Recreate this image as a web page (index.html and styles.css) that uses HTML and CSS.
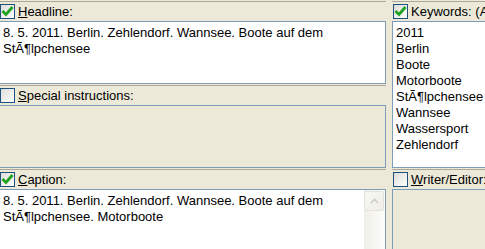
FILE: index.html
```html
<!DOCTYPE html>
<html lang="en">
  <head>
    <meta charset="UTF-8" />
    <title>Metadata</title>
    <link rel="stylesheet" href="styles.css">
  </head>
  <body>
    <div class="page">
      <div class="col">
        <div class="field">
          <div class="head">
            <span class="check">
              <svg viewBox="0 0 13 13" width="13" height="13"><path d="M1.5 6 L5 9.5 L11.5 2" /></svg>
            </span>
            <span class="label"><u>H</u>eadline:</span>
          </div>
          <div class="box">8. 5. 2011. Berlin. Zehlendorf. Wannsee. Boote auf dem StÃ¶lpchensee</div>
        </div>
        <div class="field">
          <div class="head">
            <span class="check"></span>
            <span class="label"><u>S</u>pecial instructions:</span>
          </div>
          <div class="box empty"></div>
        </div>
        <div class="field">
          <div class="head">
            <span class="check">
              <svg viewBox="0 0 13 13" width="13" height="13"><path d="M1.5 6 L5 9.5 L11.5 2" /></svg>
            </span>
            <span class="label"><u>C</u>aption:</span>
          </div>
          <div class="box caption">
            <div class="captionText">8. 5. 2011. Berlin. Zehlendorf. Wannsee. Boote auf dem StÃ¶lpchensee. Motorboote</div>
            <div class="scrollbar">
              <div class="scrollBtn">
                <svg viewBox="0 0 9 6" width="9" height="6"><path d="M1 5 L4.5 1.5 L8 5" /></svg>
              </div>
            </div>
          </div>
        </div>
      </div>
      <div class="col">
        <div class="field">
          <div class="head">
            <span class="check">
              <svg viewBox="0 0 13 13" width="13" height="13"><path d="M1.5 6 L5 9.5 L11.5 2" /></svg>
            </span>
            <span class="label">Keywords: (Alphabetical)</span>
          </div>
          <div class="box tall">
            <div>2011</div>
            <div>Berlin</div>
            <div>Boote</div>
            <div>Motorboote</div>
            <div>StÃ¶lpchensee</div>
            <div>Wannsee</div>
            <div>Wassersport</div>
            <div>Zehlendorf</div>
          </div>
        </div>
        <div class="field">
          <div class="head">
            <span class="check"></span>
            <span class="label"><u>W</u>riter/Editor:</span>
          </div>
          <div class="box empty fill"></div>
        </div>
      </div>
    </div>
  </body>
</html>
```

FILE: styles.css
```css
body {
  margin: 0;
  height: 249px;
  overflow: hidden;
  background-color: #ece9d8;
  font-family: "Liberation Sans", Arial, sans-serif;
  font-size: 13px;
  color: #000;
}
.page {
  display: grid;
  grid-template-columns: 387px 200px;
  column-gap: 6px;
  margin-left: -1px;
  padding-top: 1px;
}
.col {
  display: flex;
  flex-direction: column;
  gap: 1px;
  overflow: hidden;
}
.head {
  height: 19px;
  border-top: 1px solid #aca899;
  display: flex;
  align-items: center;
  gap: 3px;
  padding-left: 1px;
  white-space: nowrap;
}
.label {
  line-height: 19px;
}
.check {
  width: 13px;
  height: 13px;
  border: 1px solid #1c5180;
  background: linear-gradient(135deg, #dcdcd7, #ffffff);
  display: flex;
  flex-shrink: 0;
}
.check svg path {
  fill: none;
  stroke: #21a121;
  stroke-width: 2.8;
}
.box {
  box-sizing: border-box;
  height: 63px;
  border: 1px solid #7f9db9;
  background-color: #fff;
  padding: 3px;
  line-height: 16px;
}
.box.empty {
  background-color: #ece9d8;
}
.box.tall {
  height: 147px;
}
.box.fill {
  height: 80px;
}
.caption {
  height: 80px;
  display: flex;
  padding: 0;
}
.captionText {
  flex: 1;
  padding: 3px;
}
.scrollbar {
  width: 21px;
  background: linear-gradient(90deg, #efeee7, #fcfcfa);
  padding-top: 1px;
}
.scrollBtn {
  box-sizing: border-box;
  width: 20px;
  height: 20px;
  border: 1px solid #e4e2da;
  border-radius: 2px;
  background: linear-gradient(135deg, #f8f8f5, #eeede6);
  display: flex;
  align-items: center;
  justify-content: center;
}
.scrollBtn svg path {
  fill: none;
  stroke: #cdccc4;
  stroke-width: 1.6;
}
```
